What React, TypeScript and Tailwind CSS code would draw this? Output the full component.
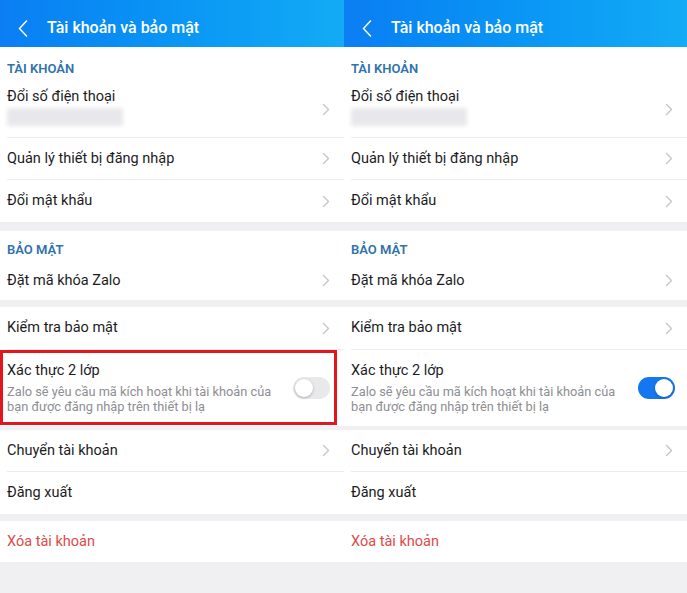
import React from 'react';

const Chevron: React.FC = () => (
  <svg width="8" height="13" viewBox="0 0 8 13" className="shrink-0">
    <path d="M1.5 1.5 L6.5 6.5 L1.5 11.5" fill="none" stroke="#c4c4c8" strokeWidth="1.3" strokeLinecap="round" strokeLinejoin="round" />
  </svg>
);

const Row: React.FC<{ label: string; chevron?: boolean; divider?: boolean; red?: boolean; h?: string }> = ({ label, chevron = true, divider = false, red = false, h = 'h-[42px]' }) => (
  <div className="pl-[7px]">
    <div className={`${h} flex items-center justify-between pr-[14px] ${divider ? 'border-b border-[#ececef]' : ''}`}>
      <span className={`text-[14.5px] ${red ? 'text-[#dc4a4a]' : 'text-[#1c1c1e]'}`}>{label}</span>
      {chevron && <Chevron />}
    </div>
  </div>
);

const SectionTitle: React.FC<{ children: React.ReactNode; h: string; pt: string }> = ({ children, h, pt }) => (
  <div className={`${h} ${pt} pl-[7px] text-[13px] font-semibold text-[#2f73ad] leading-none`}>{children}</div>
);

const Toggle: React.FC<{ on: boolean }> = ({ on }) => (
  <div className={`w-[37px] h-[22px] rounded-full p-[2px] flex shrink-0 ${on ? 'bg-[#1577f0] justify-end' : 'bg-[#e9e9ec] justify-start'}`}>
    <div className="w-[18px] h-[18px] rounded-full bg-white shadow-[0_1px_3px_rgba(0,0,0,0.25)]" />
  </div>
);

const Panel: React.FC<{ enabled: boolean; highlight: boolean; width: string }> = ({ enabled, highlight, width }) => (
  <div className={`${width} shrink-0 bg-[#f0f0f3] h-[593px] overflow-hidden`}>
    <div className="h-[47px] bg-gradient-to-r from-[#0b7ef3] to-[#13abf5] flex items-center pl-[18px] text-white">
      <svg width="10" height="17" viewBox="0 0 10 17" className="mt-[9px]">
        <path d="M8.5 1 L1.5 8.5 L8.5 16" fill="none" stroke="white" strokeWidth="1.5" strokeLinecap="round" strokeLinejoin="round" />
      </svg>
      <span className="ml-[19px] mt-[9px] text-[16px] font-medium">Tài khoản và bảo mật</span>
    </div>

    <div className="bg-white">
      <SectionTitle h="h-[34px]" pt="pt-[15px]">TÀI KHOẢN</SectionTitle>
      <div className="pl-[7px]">
        <div className="h-[57px] flex justify-between pr-[14px] border-b border-[#ececef]">
          <div className="flex flex-col pt-[6px]">
            <span className="text-[14.5px] text-[#1c1c1e] leading-[20px]">Đổi số điện thoại</span>
            <div className="mt-[1px] w-[116px] h-[18px] bg-[#e8e8ec] blur-[2px]" />
          </div>
          <div className="self-center">
            <Chevron />
          </div>
        </div>
      </div>
      <Row label="Quản lý thiết bị đăng nhập" divider />
      <Row label="Đổi mật khẩu" />
    </div>

    <div className="mt-[9px] bg-white">
      <SectionTitle h="h-[30px]" pt="pt-[12px]">BẢO MẬT</SectionTitle>
      <Row label="Đặt mã khóa Zalo" h="h-[39px]" />
    </div>

    <div className="mt-[7px] bg-white">
      <Row label="Kiểm tra bảo mật" divider h="h-[43px]" />
      <div className="relative pl-[7px] pr-[14px] h-[76px] flex items-center justify-between">
        <div className="flex flex-col -mt-[2px]">
          <span className="text-[14.5px] text-[#1c1c1e] leading-[20px]">Xác thực 2 lớp</span>
          <span className="text-[12.8px] text-[#8e8e93] leading-[15px] mt-[3px]">Zalo sẽ yêu cầu mã kích hoạt khi tài khoản của</span>
          <span className="text-[12.8px] text-[#8e8e93] leading-[15px]">bạn được đăng nhập trên thiết bị lạ</span>
        </div>
        <div className={`${enabled ? 'mr-[-2px]' : 'mr-[0px]'}`}>
          <Toggle on={enabled} />
        </div>
        {highlight && (
          <div className="absolute left-0 top-0 w-[337px] h-[75px] border-[3px] border-[#e3161d]" />
        )}
      </div>
    </div>

    <div className="mt-[4px] bg-white">
      <Row label="Chuyển tài khoản" divider />
      <Row label="Đăng xuất" chevron={false} />
    </div>

    <div className="mt-[7px] bg-white">
      <Row label="Xóa tài khoản" chevron={false} red h="h-[41px]" />
    </div>
  </div>
);

export default function App() {
  return (
    <div className="w-[687px] h-[593px] flex font-['Roboto',sans-serif] overflow-hidden">
      <Panel enabled={false} highlight width="w-[344px]" />
      <Panel enabled highlight={false} width="w-[343px]" />
    </div>
  );
}
